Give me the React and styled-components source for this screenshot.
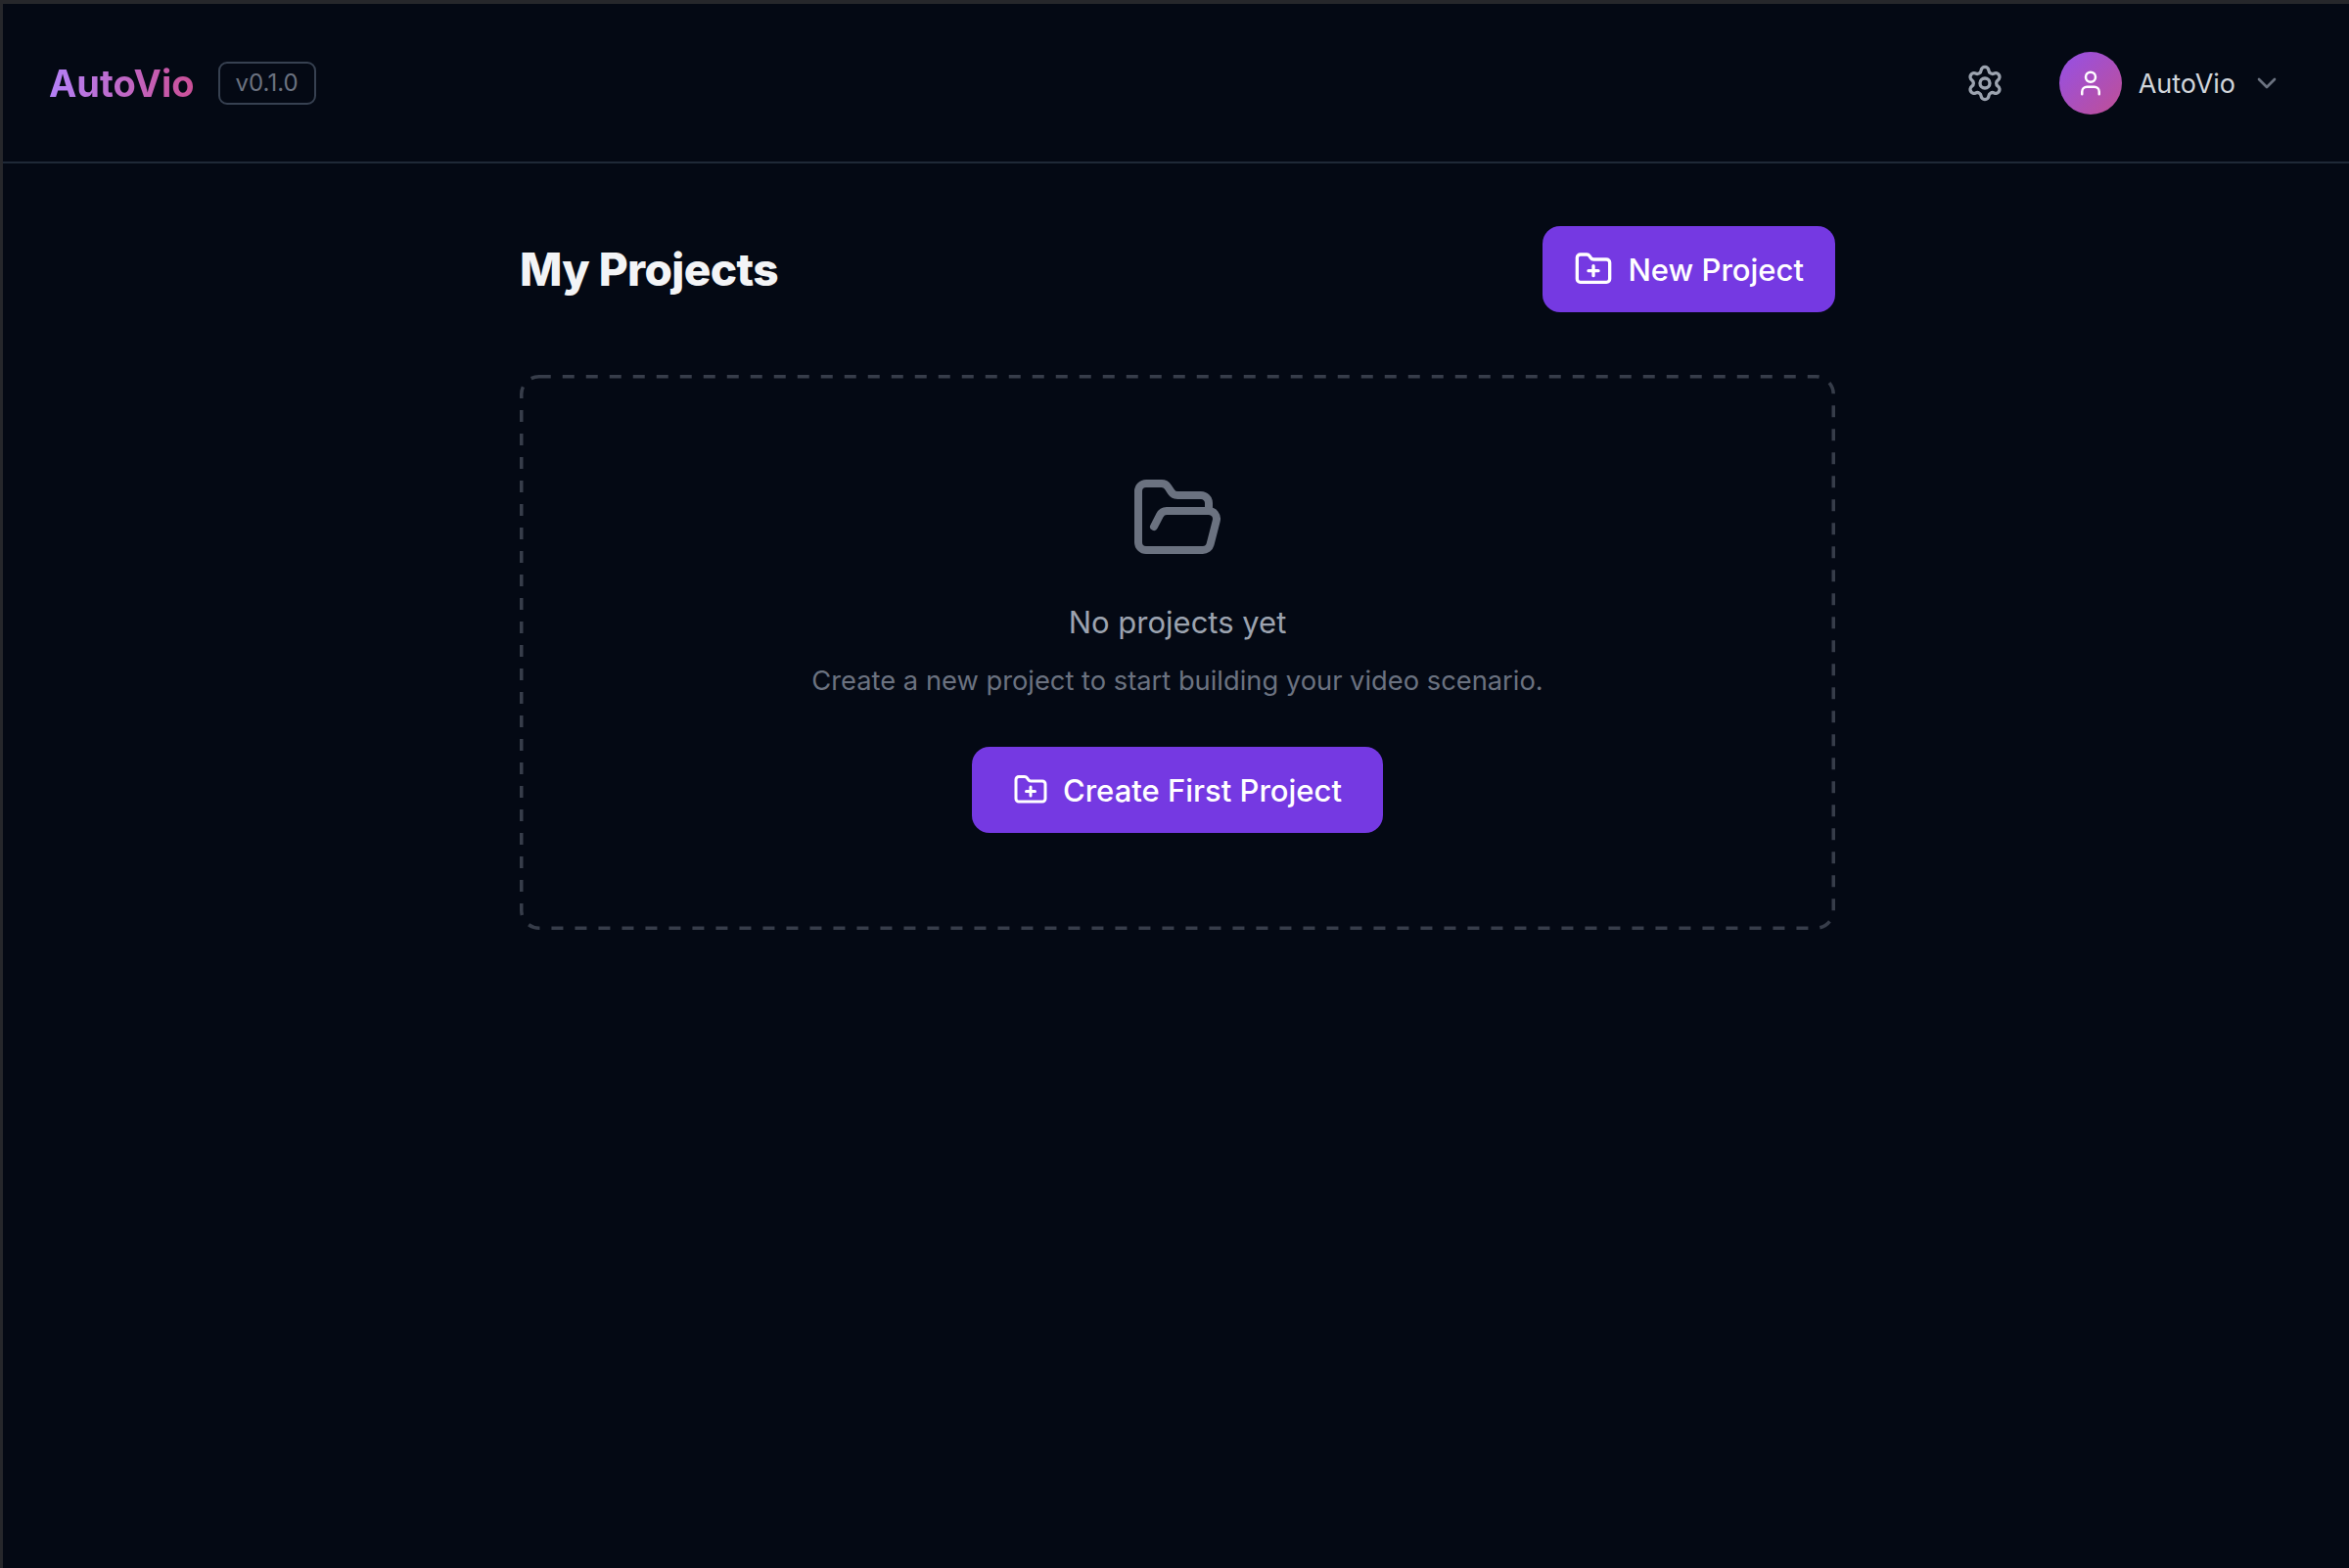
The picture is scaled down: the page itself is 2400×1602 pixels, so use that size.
import React from 'react';
import styled, { createGlobalStyle } from 'styled-components';
import { ChevronDown, FolderOpen, FolderPlus, Settings, User } from 'lucide-react';

const GlobalStyle = createGlobalStyle`
  html, body {
    margin: 0;
    padding: 0;
    background: #040914;
  }
  body {
    font-family: Inter, "Liberation Sans", sans-serif;
    -webkit-font-smoothing: antialiased;
  }
  * {
    box-sizing: border-box;
  }
`;

export default function App() {
  return (
    <Page>
      <GlobalStyle />
      <Header>
        <Brand>
          <Logo>AutoVio</Logo>
          <Version>v0.1.0</Version>
        </Brand>
        <HeaderRight>
          <IconButton>
            <Settings size={40} strokeWidth={2} />
          </IconButton>
          <UserMenu>
            <Avatar>
              <User size={30} strokeWidth={2} />
            </Avatar>
            <UserName>AutoVio</UserName>
            <Chevron>
              <ChevronDown size={32} strokeWidth={2} />
            </Chevron>
          </UserMenu>
        </HeaderRight>
      </Header>
      <Main>
        <TitleRow>
          <Title>My Projects</Title>
          <PrimaryButton $gap={15} $px={32}>
            <FolderPlus size={40} strokeWidth={2} />
            New Project
          </PrimaryButton>
        </TitleRow>
        <EmptyBox>
          <DashedOutline>
            <DashedRect rx="18" ry="18" />
          </DashedOutline>
          <EmptyIcon>
            <FolderOpen size={96} strokeWidth={2} />
          </EmptyIcon>
          <EmptyTitle>No projects yet</EmptyTitle>
          <EmptyText>Create a new project to start building your video scenario.</EmptyText>
          <PrimaryButton $gap={15} $px={41.5}>
            <FolderPlus size={36} strokeWidth={2} />
            Create First Project
          </PrimaryButton>
        </EmptyBox>
      </Main>
    </Page>
  );
}

const Page = styled.div`
  min-height: 1602px;
  background: #040914;
  border-top: 4px solid #26272b;
  border-left: 3px solid #26272b;
`;

const Header = styled.header`
  height: 163px;
  display: flex;
  align-items: center;
  justify-content: space-between;
  padding: 1px 68px 0 47px;
  border-bottom: 2px solid #1f2937;
`;

const Brand = styled.div`
  display: flex;
  align-items: center;
  gap: 24px;
`;

const Logo = styled.span`
  font-size: 38px;
  font-weight: 700;
  line-height: 54px;
  background: linear-gradient(90deg, #b481f8, #cb4f96);
  -webkit-background-clip: text;
  background-clip: text;
  color: transparent;
`;

const Version = styled.span`
  display: inline-block;
  height: 44px;
  padding: 0 16px;
  line-height: 40px;
  font-size: 24px;
  color: #6b7280;
  border: 2px solid #374151;
  border-radius: 9px;
`;

const HeaderRight = styled.div`
  display: flex;
  align-items: center;
  gap: 56px;
`;

const IconButton = styled.div`
  display: flex;
  color: #9ca3af;
`;

const UserMenu = styled.div`
  display: flex;
  align-items: center;
`;

const Avatar = styled.div`
  width: 64px;
  height: 64px;
  border-radius: 50%;
  display: flex;
  align-items: center;
  justify-content: center;
  color: #fff;
  background: linear-gradient(135deg, #9450e8, #c04f94);
`;

const UserName = styled.span`
  margin-left: 17px;
  font-size: 27px;
  color: #d1d5db;
`;

const Chevron = styled.span`
  display: flex;
  margin-left: 16px;
  color: #6b7280;
`;

const Main = styled.main`
  width: 1344px;
  margin-left: 528px;
  padding-top: 64px;
`;

const TitleRow = styled.div`
  display: flex;
  align-items: center;
  justify-content: space-between;
  margin-bottom: 64px;
`;

const Title = styled.h1`
  margin: 0;
  font-size: 46px;
  font-weight: 760;
  line-height: 68px;
  letter-spacing: -0.6px;
  color: #f3f4f6;
`;

const PrimaryButton = styled.button`
  display: inline-flex;
  align-items: center;
  gap: ${(p) => p.$gap}px;
  height: 88px;
  padding: 0 ${(p) => p.$px}px;
  border: 0;
  border-radius: 18px;
  background: #7539e2;
  color: #fff;
  font-family: inherit;
  font-size: 31px;
  font-weight: 540;
`;

const EmptyBox = styled.section`
  position: relative;
  height: 567px;
  padding-top: 99px;
  display: flex;
  flex-direction: column;
  align-items: center;
`;

const DashedOutline = styled.svg`
  position: absolute;
  inset: 0;
  width: 100%;
  height: 100%;
  pointer-events: none;
`;

const DashedRect = styled.rect`
  x: 1.75px;
  y: 1.75px;
  width: calc(100% - 3.5px);
  height: calc(100% - 3.5px);
  fill: none;
  stroke: #373d4a;
  stroke-width: 3.5px;
  stroke-dasharray: 12 12;
`;

const EmptyIcon = styled.div`
  display: flex;
  color: #6b7280;
  margin-bottom: 35px;
`;

const EmptyTitle = styled.h3`
  margin: 0 0 18px;
  font-size: 31px;
  font-weight: 400;
  line-height: 45px;
  color: #9ca3af;
`;

const EmptyText = styled.p`
  margin: 0 0 47px;
  font-size: 27.3px;
  line-height: 40px;
  color: #6b7280;
`;
